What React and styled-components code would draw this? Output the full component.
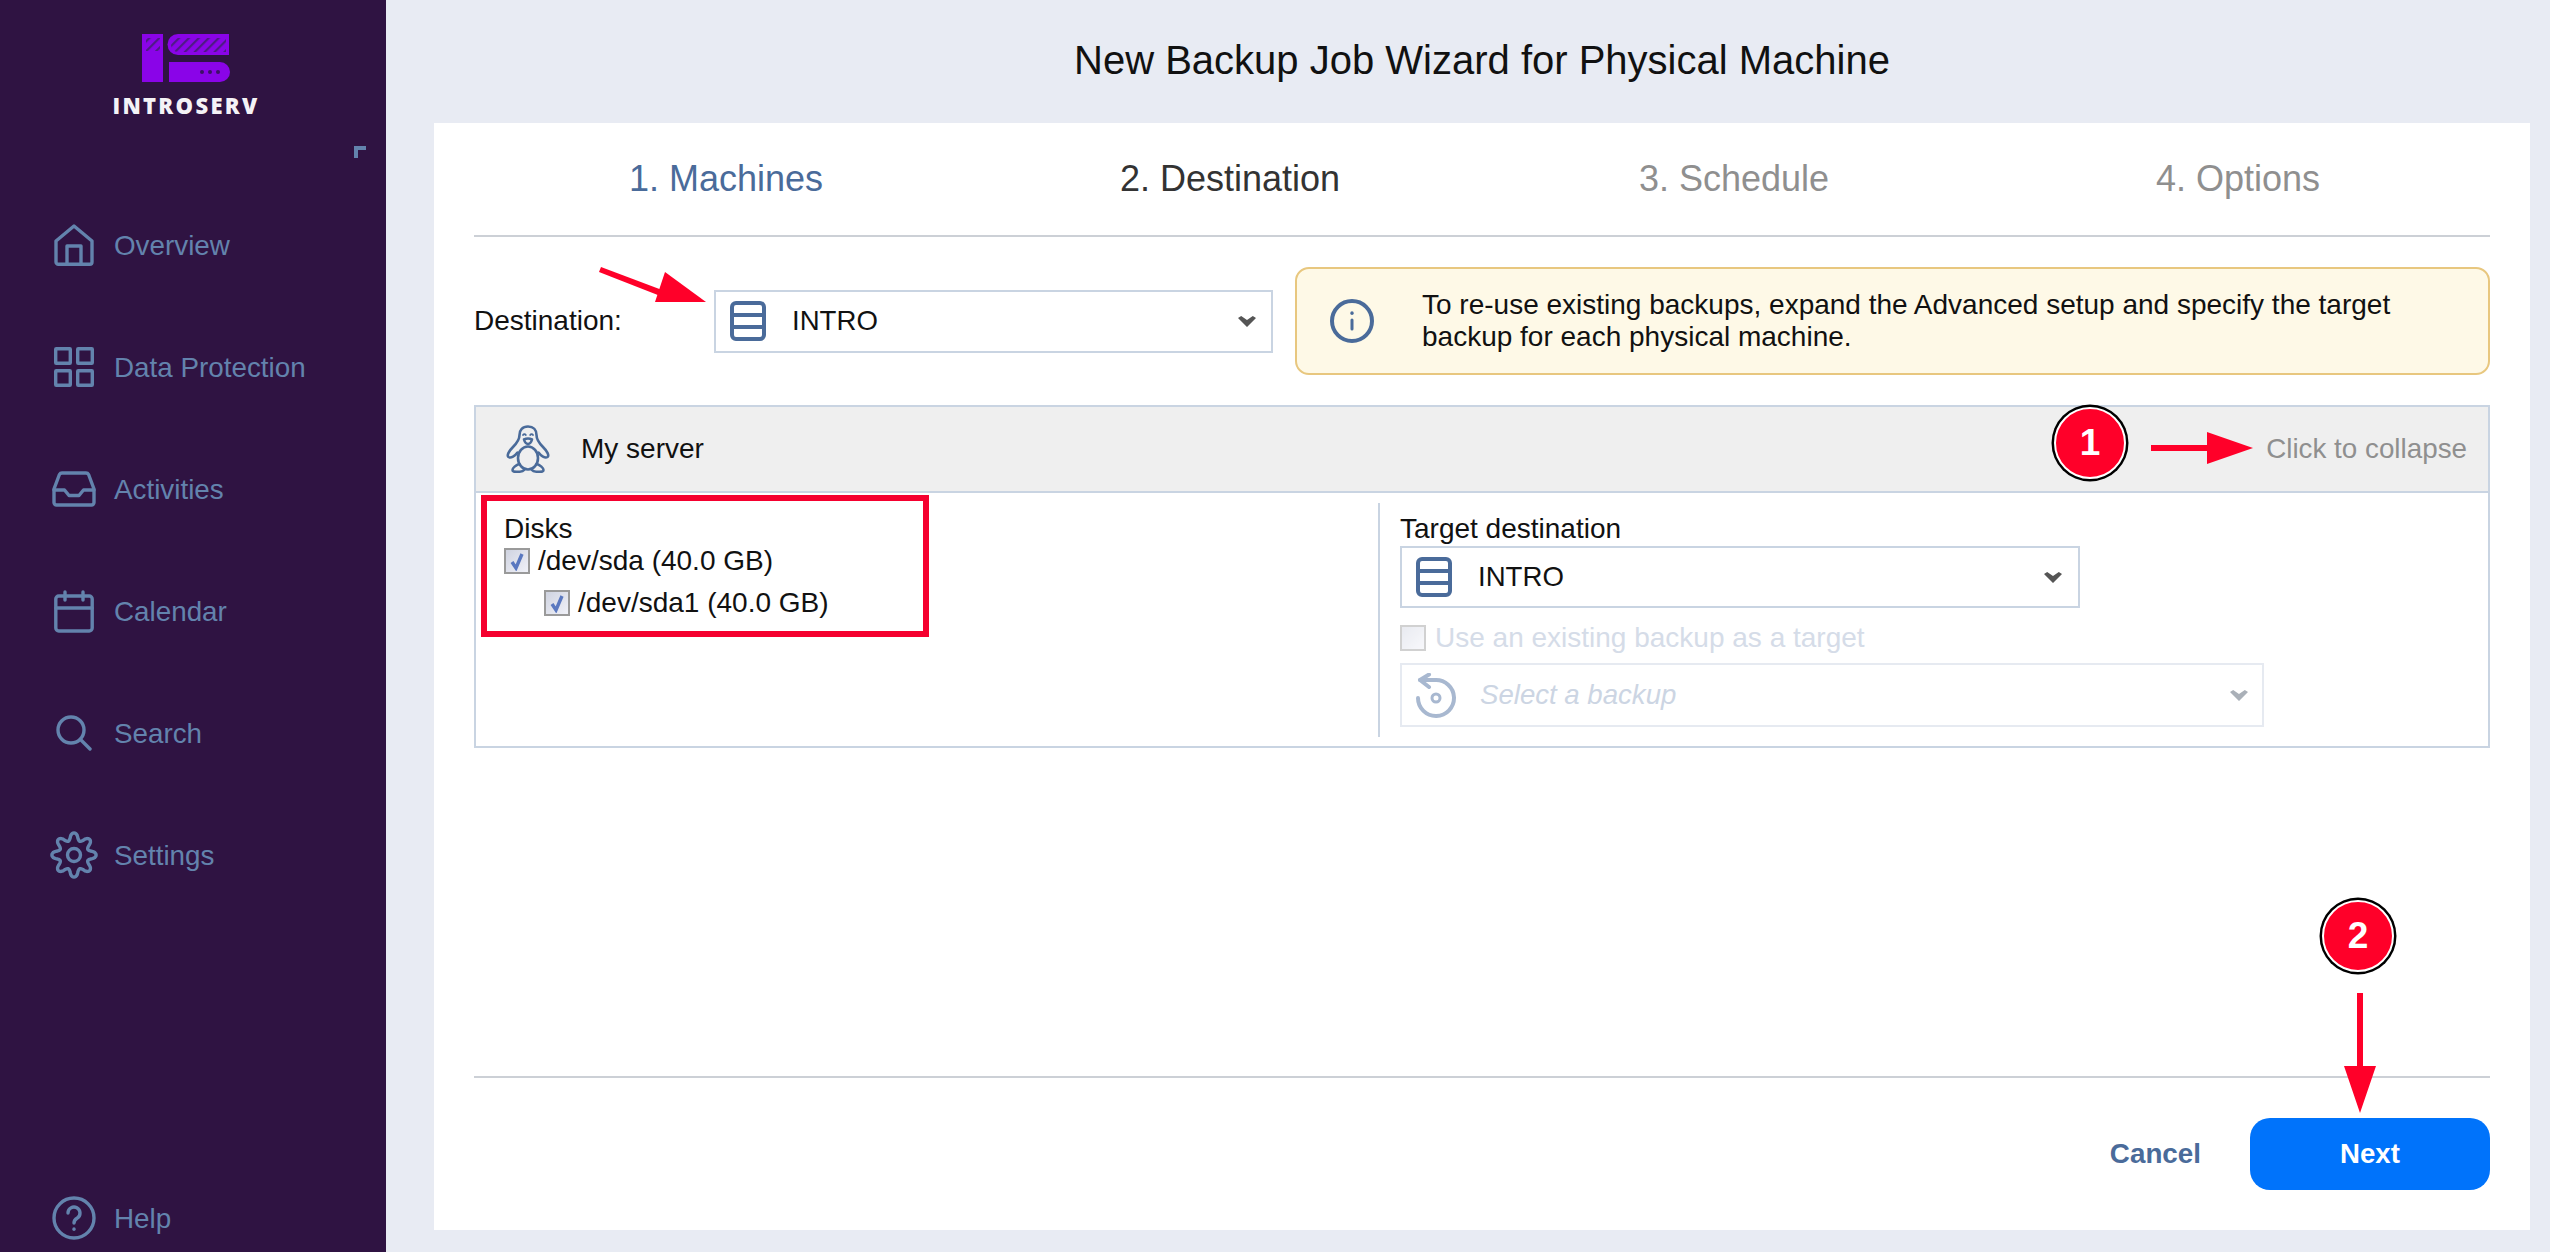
import React from "react";
import styled, { createGlobalStyle } from "styled-components";

const NAVY = "#4a6b9a";
const NAV_TEXT = "#6383ad";
const LINE = "#c9d4e2";
const RED = "#ff0029";

const GlobalStyle = createGlobalStyle`
  html, body, #root {
    margin: 0;
    height: 100%;
  }
  body {
    font-family: "Liberation Sans", Arial, sans-serif;
    overflow: hidden;
  }
  * {
    box-sizing: border-box;
  }
`;

// wavy gear outline with eight lobes, one of them on top
function gearPath() {
  const points = [];
  for (let i = 0; i < 160; i++) {
    const angle = (i / 160) * Math.PI * 2;
    const wave = Math.cos(angle * 8);
    const r = 18.5 + 3.6 * Math.sign(wave) * Math.pow(Math.abs(wave), 0.75);
    points.push(
      (24 + r * Math.sin(angle)).toFixed(2) + " " + (24 - r * Math.cos(angle)).toFixed(2)
    );
  }
  return "M" + points.join("L") + "Z";
}

const Line = { fill: "none", stroke: "currentColor", strokeLinecap: "round", strokeLinejoin: "round" };

const HomeIcon = () => (
  <svg width="40" height="42" viewBox="0 0 40 42" {...Line} strokeWidth="3.4">
    <path d="M2 17 20 2l18 15v21a2.300 2.300 0 0 1-2.300 2.300H4.300A2.300 2.300 0 0 1 2 38z" />
    <path d="M13 40V22h14v18" />
  </svg>
);

const GridIcon = () => (
  <svg width="40" height="40" viewBox="0 0 40 40" {...Line} strokeWidth="3.4">
    <rect x="1.700" y="1.700" width="14.600" height="14.600" rx="0.500" />
    <rect x="23.700" y="1.700" width="14.600" height="14.600" rx="0.500" />
    <rect x="1.700" y="23.700" width="14.600" height="14.600" rx="0.500" />
    <rect x="23.700" y="23.700" width="14.600" height="14.600" rx="0.500" />
  </svg>
);

const InboxIcon = () => (
  <svg width="44" height="36" viewBox="0 0 44 36" {...Line} strokeWidth="3.4">
    <path d="M10 2h24a3 3 0 0 1 2.600 1.500L42 18v13.500a2.500 2.500 0 0 1-2.500 2.500h-35A2.500 2.500 0 0 1 2 31.500V18L7.400 3.500A3 3 0 0 1 10 2z" />
    <path d="M2 19h10.500l4.500 5.500h10l4.500-5.500H42" />
  </svg>
);

const CalendarIcon = () => (
  <svg width="40" height="43" viewBox="0 0 40 43" {...Line} strokeWidth="3.4">
    <rect x="1.800" y="6" width="36.400" height="35" rx="3" />
    <path d="M2 18h36M11 2v8M29 2v8" />
  </svg>
);

const SearchIcon = () => (
  <svg width="36" height="36" viewBox="0 0 36 36" {...Line} strokeWidth="3.4">
    <circle cx="15" cy="15" r="13" />
    <path d="m24.500 24.500 9.500 9.500" />
  </svg>
);

const GearIcon = () => (
  <svg width="48" height="48" viewBox="0 0 48 48" {...Line} strokeWidth="3.4">
    <path d={gearPath()} />
    <circle cx="24" cy="24" r="6.500" />
  </svg>
);

const HelpIcon = () => (
  <svg width="44" height="44" viewBox="0 0 44 44" {...Line} strokeWidth="3.4">
    <circle cx="22" cy="22" r="20" />
    <path d="M16 17a6 6 0 1 1 9.300 5c-2.300 1.400-3.300 2.400-3.300 5" />
    <path d="M22 33v.2" />
  </svg>
);

const ServerIcon = () => (
  <svg width="36" height="40" viewBox="0 0 36 40" {...Line} strokeWidth="4">
    <rect x="2" y="2" width="32" height="36" rx="4" />
    <path d="M2 14h32M2 26h32" strokeLinecap="butt" />
  </svg>
);

const BackupIcon = () => (
  <svg width="41" height="45" viewBox="0 0 41 45" {...Line} strokeWidth="4">
    <path d="M4 7h15a18 18 0 1 1-17 18" />
    <path d="M13 1.500 4 7l9 7" />
    <circle cx="20" cy="25" r="4" strokeWidth="3" />
  </svg>
);

const InfoIcon = () => (
  <svg width="44" height="44" viewBox="0 0 44 44" {...Line} strokeWidth="4">
    <circle cx="22" cy="22" r="20" />
    <path d="M22 21v9" strokeWidth="3" />
    <path d="M22 14v.2" strokeWidth="3.400" />
  </svg>
);

const PenguinIcon = () => (
  <svg width="44" height="48" viewBox="0 0 44 48" {...Line} strokeWidth="2.600">
    <path d="M11.500 27.500C9 31 5 33.500 2.500 32 .5 30.500 3 26 7 22c4-4 6.500-7 6.500-12S16.500 1.500 22 1.500 30.500 5 30.500 10s2.500 8 6.500 12c4 4 6.500 8.500 4.500 10-2.500 1.500-6.500-1-9-4.500" />
    <ellipse cx="22" cy="33" rx="10" ry="11.500" />
    <path d="M13 39c-3 1-6.500 4-6.500 6 0 2 2 1.800 5 1.800 3 0 5.500-.3 6.500-1.800M31 39c3 1 6.500 4 6.500 6 0 2-2 1.800-5 1.800-3 0-5.500-.3-6.500-1.800" />
    <path d="M18 14.500c2.500-1.300 5.500-1.300 8 0-.8 2.800-2.500 4.500-4 4.500s-3.200-1.700-4-4.500z" />
    <path d="M17 10c.8-1.300 2-1.300 2.800 0M24.200 10c.8-1.300 2-1.300 2.800 0" strokeWidth="1.800" />
  </svg>
);

const Chevron = ({ $tone }) => (
  <svg width="18" height="11" viewBox="0 0 18 11" fill={$tone}>
    <path d="M0 2 3.200 0 9 4 14.800 0 18 2 9 11z" />
  </svg>
);

const LogoMark = () => (
  <svg width="88" height="48" viewBox="0 0 88 48">
    <defs>
      <pattern id="hatch" width="7" height="7" patternUnits="userSpaceOnUse" patternTransform="rotate(45)">
        <rect width="2.200" height="7" fill="#4f1a86" />
      </pattern>
    </defs>
    <rect width="21" height="48" fill="#8a04e8" />
    <rect x="4" y="4" width="14" height="13" fill="url(#hatch)" />
    <path d="M36 0h51v21H36a10.500 10.500 0 0 1 0-21z" fill="#8a04e8" />
    <path d="M36 4h48v14H36a7 7 0 0 1 0-14z" fill="url(#hatch)" />
    <path d="M27 28h51a10 10 0 0 1 0 20H27z" fill="#8a04e8" />
    <circle cx="60" cy="38" r="2" fill="#3d1066" />
    <circle cx="68" cy="38" r="2" fill="#3d1066" />
    <circle cx="76" cy="38" r="2" fill="#3d1066" />
  </svg>
);

const Shell = styled.div`
  display: flex;
  height: 100vh;
  background: #e8ebf3;
`;

const Sidebar = styled.aside`
  width: 386px;
  flex: none;
  display: flex;
  flex-direction: column;
  background: #2f1342;
`;

const Brand = styled.div`
  width: 372px;
  padding-top: 34px;
  display: flex;
  flex-direction: column;
  align-items: center;
`;

const Wordmark = styled.div`
  margin-top: 15px;
  color: #f4f2f6;
  font-family: "Open Sans", sans-serif;
  font-weight: 800;
  font-size: 22px;
  line-height: 17px;
  letter-spacing: 2.3px;
`;

const CollapseCorner = styled.div`
  width: 12px;
  height: 12px;
  margin: 32px 0 0 354px;
  border-top: 4px solid ${NAV_TEXT};
  border-left: 4px solid ${NAV_TEXT};
`;

const Nav = styled.nav`
  margin-top: 26px;
`;

const NavItem = styled.div`
  display: flex;
  align-items: center;
  height: ${(p) => (p.$compact ? "68px" : "122px")};
  padding-left: 50px;
  color: ${NAV_TEXT};
  font-size: 27.8px;
`;

const NavIcon = styled.span`
  width: 48px;
  margin-right: 16px;
  display: flex;
  justify-content: center;
`;

const NavLabel = styled.span`
  margin-top: 2px;
`;

const HelpLink = styled(NavItem)`
  margin-top: auto;
`;

const Main = styled.main`
  flex: 1;
  min-width: 0;
  display: flex;
  flex-direction: column;
`;

const Title = styled.h1`
  height: 123px;
  margin: 0 20px 0 48px;
  padding-bottom: 3px;
  display: flex;
  align-items: center;
  justify-content: center;
  color: #111;
  font-size: 40px;
  font-weight: 400;
`;

const Card = styled.section`
  flex: 1;
  margin: 0 20px 22px 48px;
  padding: 0 40px;
  display: flex;
  flex-direction: column;
  background: #fff;
`;

const Steps = styled.div`
  display: grid;
  grid-template-columns: repeat(4, 1fr);
  align-items: center;
  height: 114px;
  border-bottom: 2px solid #ccd0d6;
`;

const Step = styled.div`
  text-align: center;
  font-size: 36px;
  color: ${(p) => p.$color};
`;

const DestinationRow = styled.div`
  position: relative;
  display: flex;
  align-items: center;
  height: 108px;
  margin-top: 30px;
`;

const FieldLabel = styled.div`
  width: 240px;
  flex: none;
  color: #111;
  font-size: 28px;
`;

const Select = styled.div`
  display: flex;
  align-items: center;
  flex: none;
  width: ${(p) => p.$width}px;
  height: ${(p) => p.$height}px;
  padding: 0 ${(p) => p.$right}px 0 14px;
  border: 2px solid ${(p) => (p.$off ? "#e6eaf1" : LINE)};
  color: ${(p) => (p.$off ? "#a8b8d0" : NAVY)};
`;

const SelectText = styled.span`
  margin-left: ${(p) => (p.$off ? "23px" : "26px")};
  flex: 1;
  color: ${(p) => (p.$off ? "#ccd5e3" : "#111")};
  font-size: 27.6px;
  font-style: ${(p) => (p.$off ? "italic" : "normal")};
`;

const Notice = styled.div`
  flex: 1;
  height: 108px;
  margin-left: 22px;
  padding-left: 33px;
  display: flex;
  align-items: center;
  background: #fef9e7;
  border: 2px solid #e8c77f;
  border-radius: 14px;
  color: ${NAVY};
`;

const NoticeText = styled.div`
  margin-left: 48px;
  width: 1030px;
  color: #111;
  font-size: 28px;
  line-height: 32px;
`;

const PointerArrow = styled.svg`
  position: absolute;
  left: ${(p) => p.$left}px;
  top: ${(p) => p.$top}px;
`;

const Panel = styled.div`
  height: 343px;
  margin-top: 30px;
  border: 2px solid ${LINE};
`;

const PanelHeader = styled.div`
  position: relative;
  display: flex;
  align-items: center;
  height: 86px;
  padding: 0 21px 0 30px;
  background: #efefef;
  border-bottom: 2px solid ${LINE};
  color: ${NAVY};
`;

const ServerName = styled.span`
  margin-left: 31px;
  flex: 1;
  color: #111;
  font-size: 28px;
`;

const CollapseHint = styled.span`
  color: #8f8f8f;
  font-size: 27.8px;
`;

const Badge = styled.div`
  position: absolute;
  right: ${(p) => p.$right}px;
  top: ${(p) => p.$top}px;
  width: 72px;
  height: 72px;
  display: flex;
  align-items: center;
  justify-content: center;
  background: ${RED};
  border: 2px solid #fff;
  border-radius: 50%;
  box-shadow: 0 0 0 2.5px #000;
  color: #fff;
  font-size: 37px;
  font-weight: 700;
`;

const PanelBody = styled.div`
  display: flex;
  height: 253px;
`;

const DisksColumn = styled.div`
  width: 902px;
  flex: none;
`;

const DisksBox = styled.div`
  width: 448px;
  height: 142px;
  margin: 2px 0 0 5px;
  padding: 11px 0 0 17px;
  border: 6px solid #f5002f;
  color: #111;
  font-size: 28px;
`;

const DisksTitle = styled.div`
  line-height: 33px;
`;

const CheckRow = styled.label`
  display: flex;
  align-items: center;
  height: 32px;
  margin: ${(p) => (p.$nested ? "10px 0 0 40px" : "0")};
`;

const CheckBox = styled.span`
  width: 26px;
  height: 26px;
  margin-right: ${(p) => (p.$off ? "9px" : "8px")};
  flex: none;
  display: flex;
  align-items: center;
  justify-content: center;
  background: linear-gradient(135deg, #cfd3e0, #f0f1f8);
  border: 2px solid #9a9a9a;
  opacity: ${(p) => (p.$off ? 0.45 : 1)};
`;

const TargetColumn = styled.div`
  flex: 1;
  height: 234px;
  margin-top: 10px;
  padding: 8px 0 0 20px;
  border-left: 2px solid ${LINE};
`;

const TargetLabel = styled.div`
  color: #111;
  font-size: 28px;
  line-height: 35px;
`;

const ReuseRow = styled.label`
  display: flex;
  align-items: center;
  height: 26px;
  margin: 17px 0 12px;
  color: #d5dce8;
  font-size: 28px;
`;

const Footer = styled.footer`
  position: relative;
  margin-top: auto;
  padding: 40px 0;
  display: flex;
  align-items: center;
  justify-content: flex-end;
  border-top: 2px solid #ccd0d6;
`;

const CancelLink = styled.a`
  margin-right: 49px;
  color: ${NAVY};
  font-size: 27.8px;
  font-weight: 700;
`;

const NextButton = styled.button`
  width: 240px;
  height: 72px;
  border: 0;
  border-radius: 20px;
  background: #0073fb;
  color: #fff;
  font-family: inherit;
  font-size: 27.6px;
  font-weight: 700;
`;

const Tick = () => (
  <svg width="18" height="20" viewBox="0 0 18 20" fill="none" stroke="#5a78c0" strokeWidth="3.400">
    <path d="M4 11l4 6 6-14" />
  </svg>
);

const NAV_ITEMS = [
  { label: "Overview", icon: <HomeIcon /> },
  { label: "Data Protection", icon: <GridIcon /> },
  { label: "Activities", icon: <InboxIcon /> },
  { label: "Calendar", icon: <CalendarIcon /> },
  { label: "Search", icon: <SearchIcon /> },
  { label: "Settings", icon: <GearIcon /> },
];

const STEPS = [
  { label: "1. Machines", color: NAVY },
  { label: "2. Destination", color: "#333" },
  { label: "3. Schedule", color: "#8f8f8f" },
  { label: "4. Options", color: "#8f8f8f" },
];

export default function App() {
  return (
    <Shell>
      <GlobalStyle />
      <Sidebar>
        <Brand>
          <LogoMark />
          <Wordmark>INTROSERV</Wordmark>
        </Brand>
        <CollapseCorner />
        <Nav>
          {NAV_ITEMS.map((item) => (
            <NavItem key={item.label}>
              <NavIcon>{item.icon}</NavIcon>
              <NavLabel>{item.label}</NavLabel>
            </NavItem>
          ))}
        </Nav>
        <HelpLink $compact>
          <NavIcon>
            <HelpIcon />
          </NavIcon>
          <NavLabel>Help</NavLabel>
        </HelpLink>
      </Sidebar>

      <Main>
        <Title>New Backup Job Wizard for Physical Machine</Title>
        <Card>
          <Steps>
            {STEPS.map((step) => (
              <Step key={step.label} $color={step.color}>
                {step.label}
              </Step>
            ))}
          </Steps>

          <DestinationRow>
            <FieldLabel>Destination:</FieldLabel>
            <Select $width={559} $height={63} $right={15}>
              <ServerIcon />
              <SelectText>INTRO</SelectText>
              <Chevron $tone="#555" />
            </Select>
            <Notice>
              <InfoIcon />
              <NoticeText>
                To re-use existing backups, expand the Advanced setup and specify the target backup
                for each physical machine.
              </NoticeText>
            </Notice>
            <PointerArrow $left={125} $top={0} width="110" height="38" viewBox="0 0 110 38">
              <path d="M2 0 71 26l-2 6L0 5z" fill={RED} />
              <path d="M66 5 107 35H56z" fill={RED} />
            </PointerArrow>
          </DestinationRow>

          <Panel>
            <PanelHeader>
              <PenguinIcon />
              <ServerName>My server</ServerName>
              <CollapseHint>Click to collapse</CollapseHint>
              <Badge $right={362} $top={0}>
                1
              </Badge>
              <PointerArrow $left={1675} $top={25} width="102" height="32" viewBox="0 0 102 32">
                <path d="M0 13h56V0l46 16-46 16V19H0z" fill={RED} />
              </PointerArrow>
            </PanelHeader>
            <PanelBody>
              <DisksColumn>
                <DisksBox>
                  <DisksTitle>Disks</DisksTitle>
                  <CheckRow>
                    <CheckBox>
                      <Tick />
                    </CheckBox>
                    /dev/sda (40.0 GB)
                  </CheckRow>
                  <CheckRow $nested>
                    <CheckBox>
                      <Tick />
                    </CheckBox>
                    /dev/sda1 (40.0 GB)
                  </CheckRow>
                </DisksBox>
              </DisksColumn>
              <TargetColumn>
                <TargetLabel>Target destination</TargetLabel>
                <Select $width={680} $height={62} $right={16}>
                  <ServerIcon />
                  <SelectText>INTRO</SelectText>
                  <Chevron $tone="#555" />
                </Select>
                <ReuseRow>
                  <CheckBox $off />
                  Use an existing backup as a target
                </ReuseRow>
                <Select $off $width={864} $height={64} $right={14}>
                  <BackupIcon />
                  <SelectText $off>Select a backup</SelectText>
                  <Chevron $tone="#aab0b8" />
                </Select>
              </TargetColumn>
            </PanelBody>
          </Panel>

          <Footer>
            <CancelLink>Cancel</CancelLink>
            <NextButton>Next</NextButton>
            <Badge $right={96} $top={-178}>
              2
            </Badge>
            <PointerArrow $left={1870} $top={-85} width="32" height="120" viewBox="0 0 32 120">
              <path d="M13 0h6v73h13l-16 47L0 73h13z" fill={RED} />
            </PointerArrow>
          </Footer>
        </Card>
      </Main>
    </Shell>
  );
}
